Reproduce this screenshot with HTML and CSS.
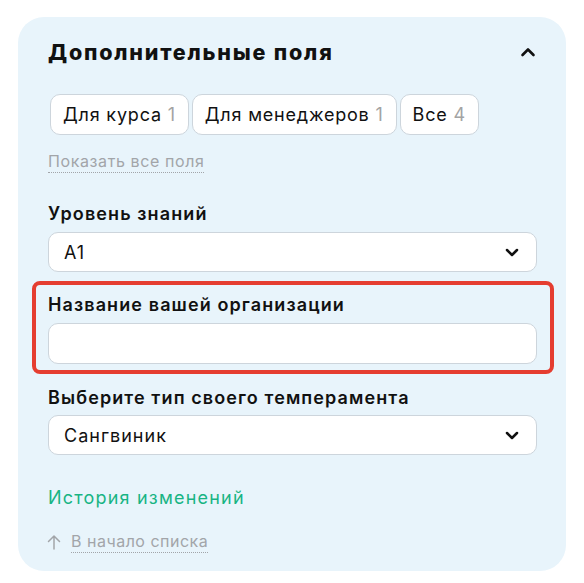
FILE: index.html
```html
<!DOCTYPE html>
<html lang="ru">
<head>
<meta charset="utf-8">
<title>Дополнительные поля</title>
<link rel="stylesheet" href="styles.css">
</head>
<body>
<section class="panel">
  <header class="panel-head">
    <h2 class="panel-title">Дополнительные поля</h2>
    <svg class="chev-up" width="16" height="10" viewBox="0 0 16 10"><polyline points="2.5,8 8,2.5 13.5,8" fill="none" stroke="#111" stroke-width="2.6" stroke-linecap="round" stroke-linejoin="round"/></svg>
  </header>
  <div class="tabs">
    <button class="tab">Для курса <span class="count">1</span></button>
    <button class="tab">Для менеджеров <span class="count">1</span></button>
    <button class="tab">Все <span class="count">4</span></button>
  </div>
  <div class="show-all"><span class="dotted">Показать все поля</span></div>

  <div class="field first">
    <div class="label">Уровень знаний</div>
    <div class="select"><span>A1</span>
      <svg class="chev-down" width="14" height="9" viewBox="0 0 14 9"><polyline points="2,2 7,7 12,2" fill="none" stroke="#111" stroke-width="2.5" stroke-linecap="round" stroke-linejoin="round"/></svg>
    </div>
  </div>

  <div class="field highlighted">
    <div class="label">Название вашей организации</div>
    <div class="input"></div>
  </div>

  <div class="field third">
    <div class="label">Выберите тип своего темперамента</div>
    <div class="select"><span>Сангвиник</span>
      <svg class="chev-down" width="14" height="9" viewBox="0 0 14 9"><polyline points="2,2 7,7 12,2" fill="none" stroke="#111" stroke-width="2.5" stroke-linecap="round" stroke-linejoin="round"/></svg>
    </div>
  </div>

  <div class="history">История изменений</div>
  <div class="to-top">
    <svg class="arrow" width="14" height="16" viewBox="0 0 14 16"><path d="M7 15V2M1.5 7.5L7 2l5.5 5.5" fill="none" stroke="#a2a5a9" stroke-width="1.5" stroke-linecap="round" stroke-linejoin="round"/></svg>
    <span class="dotted">В начало списка</span>
  </div>
</section>
</body>
</html>
```

FILE: styles.css
```css
* { box-sizing: border-box; }
body {
  margin: 0;
  background: #ffffff;
  font-family: Inter, "Noto Sans", sans-serif;
  color: #111;
}
.panel {
  margin: 17px 18px 0 18px;
  width: 548px;
  height: 554px;
  background: #e8f4fb;
  border-radius: 26px;
  padding: 21px 29px 0 30px;
}
.panel-head {
  display: flex;
  align-items: center;
  justify-content: space-between;
  height: 28px;
}
.panel-title {
  margin: 0;
  font-size: 21.5px;
  font-weight: 800;
  line-height: 28px;
  letter-spacing: 1.8px;
}
.chev-up { margin-right: 1px; }
.tabs {
  display: flex;
  gap: 3px;
  margin: 28px 0 0 2px;
}
.tab {
  height: 41px;
  padding: 0 12px;
  border: 1px solid #cdd5dc;
  background: #fff;
  border-radius: 10px;
  font-family: inherit;
  font-size: 18px;
  color: #111;
  letter-spacing: 0.8px;
}
.count { color: #a3a3a3; }
.show-all {
  margin-top: 16px;
  font-size: 16px;
  line-height: 20px;
  color: #a2a5a9;
  letter-spacing: 0.6px;
}
.dotted {
  border-bottom: 1px dotted #a2a5a9;
  padding-bottom: 1px;
}
.label {
  font-size: 18px;
  font-weight: 600;
  line-height: 24px;
  letter-spacing: 1.1px;
}
.field.first { margin-top: 31px; }
.select, .input {
  margin-top: 6px;
  height: 40px;
  background: #fff;
  border: 1px solid #cdd5dc;
  border-radius: 10px;
  display: flex;
  align-items: center;
  justify-content: space-between;
  padding: 0 17px 0 15px;
  font-size: 18px;
  letter-spacing: 1px;
}
.field.third .select { margin-top: 5px; }
.input { height: 41px; }
.highlighted {
  margin: 9px -17px 0 -16px;
  border: 4px solid #e53d30;
  border-radius: 8px;
  padding: 8px 13px 6px 12px;
}
.field.third { margin-top: 12px; }
.history {
  margin-top: 31px;
  font-size: 18px;
  line-height: 24px;
  color: #18b484;
  letter-spacing: 1.2px;
}
.to-top {
  margin-top: 21px;
  display: flex;
  align-items: center;
  gap: 10px;
  font-size: 16px;
  line-height: 20px;
  color: #a2a5a9;
  letter-spacing: 0.5px;
}
.arrow { margin-left: -1px; }
```
